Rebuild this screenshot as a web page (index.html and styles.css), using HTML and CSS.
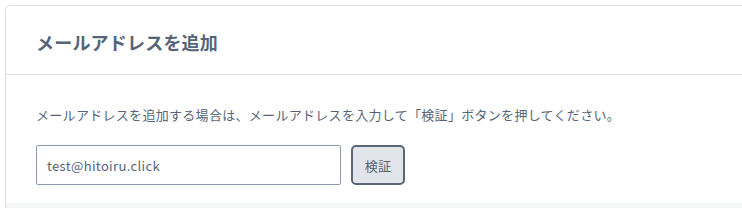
FILE: index.html
```html
<!DOCTYPE html>
<html lang="ja">
<head>
    <meta charset="UTF-8">
    <meta name="viewport" content="width=device-width, initial-scale=1.0">
    <title>メールアドレスを追加</title>
    <link rel="stylesheet" href="styles.css">
</head>
<body>
    <div class="card">
        <div class="card-header">
            <h2>メールアドレスを追加</h2>
        </div>
        <div class="card-body">
            <p class="note">メールアドレスを追加する場合は、メールアドレスを入力して「検証」ボタンを押してください。</p>
            <form class="email-form">
                <input type="email" class="email-input" value="test@hitoiru.click">
                <button type="button" class="verify-btn">検証</button>
            </form>
        </div>
        <div class="card-footer"></div>
    </div>
</body>
</html>
```

FILE: styles.css
```css
:root {
    --text-color: #576477;
    --border-color: #dcdee4;
    --footer-color: #f5f6f7;
}

* {
    margin: 0;
    padding: 0;
    box-sizing: border-box;
}

body {
    font-family: 'Noto Sans CJK JP', 'Noto Sans', sans-serif;
    color: var(--text-color);
    background-color: white;
    padding: 5px 0 0 5px;
    overflow: hidden;
}

.card {
    border: 1px solid var(--border-color);
    border-radius: 5px;
    margin-right: -12px;
    background-color: white;
}

.card-header {
    padding: 24px 30px 20px;
    border-bottom: 1px solid var(--border-color);
}

.card-header h2 {
    font-size: 18px;
    line-height: 24px;
    font-weight: 700;
    letter-spacing: 0.2px;
}

.card-body {
    padding: 30px 30px 18px;
}

.note {
    font-size: 13px;
    line-height: 20px;
    letter-spacing: 0.3px;
    margin-bottom: 20px;
}

.email-form {
    display: flex;
    gap: 10px;
}

.email-input {
    width: 305px;
    height: 40px;
    padding: 0 10px;
    border: 1px solid #8c9cb0;
    border-radius: 2px;
    font-family: inherit;
    font-size: 13px;
    letter-spacing: 0.35px;
    color: var(--text-color);
    outline: none;
}

.verify-btn {
    width: 54px;
    height: 40px;
    border: 2px solid #5b6779;
    border-radius: 5px;
    background-color: #e1e4e8;
    font-family: inherit;
    font-size: 13px;
    letter-spacing: 0.3px;
    color: var(--text-color);
}

.card-footer {
    height: 10px;
    background-color: var(--footer-color);
}
```
